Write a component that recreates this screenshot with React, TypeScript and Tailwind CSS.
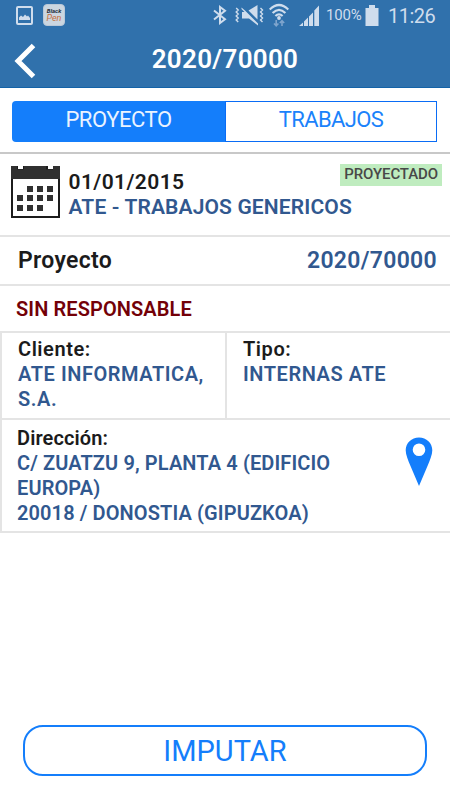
import React from "react";

const StatusBar = () => (
  <div className="flex h-[30px] items-center pl-4 pr-[14px] text-[#cfdded]">
    <svg width="17" height="19" viewBox="0 0 17 19" fill="none">
      <rect x="1" y="1" width="15" height="17" rx="1" stroke="currentColor" strokeWidth="2" />
      <path d="M3 14V11.5L5 9.5L7 11L9 8.5L11 10.5L12 9.5L14 12V14Z" fill="currentColor" />
    </svg>
    <div className="ml-[10px] flex h-[22px] w-[22px] flex-col items-center justify-center rounded-[4px] border border-[#b9c8d8] bg-[#cbd6e0]">
      <span className="text-[6px] font-bold italic leading-[6px] text-[#26303c]">Black</span>
      <span className="text-[9px] italic leading-[8px] text-[#c5703f]">Pen</span>
    </div>

    <div className="ml-auto flex items-center">
      <svg width="14" height="20" viewBox="0 0 14 20" fill="none" stroke="currentColor" strokeWidth="2">
        <path d="M1 5.5L12 14.2L7 18V2L12 5.8L1 14.5" />
      </svg>
      <svg className="ml-[8px]" width="29" height="22" viewBox="0 0 29 22" fill="currentColor">
        <path d="M6.5 3.5L10 6.5L23 19.5V21.5L14 14.5H7V8H9.5L6.5 5Z" />
        <path d="M13.5 6.5L22.5 1V15.5Z" />
        <path d="M1.2 4L3.2 6L1.2 8L3.2 10L1.2 12L3.2 14L1.2 16L3.2 18M25.5 4L27.5 6L25.5 8L27.5 10L25.5 12L27.5 14L25.5 16L27.5 18" fill="none" stroke="currentColor" strokeWidth="1.4" />
      </svg>
      <svg className="ml-[5px]" width="20" height="24" viewBox="0 0 20 24" fill="none">
        <g stroke="currentColor" strokeWidth="2.2">
          <path d="M0.7 6.5Q10 -2.5 19.3 6.5" />
          <path d="M3.6 10Q10 3.7 16.4 10" />
          <path d="M6.4 13Q10 9.7 13.6 13" />
        </g>
        <circle cx="10" cy="15" r="1.9" fill="currentColor" />
        <path d="M7.2 17V23M5 20.5L7.2 22.8L9.4 20.5M13 23V17.5M10.8 20L13 17.7L15.2 20" stroke="#7fa5cd" strokeWidth="1.6" />
      </svg>
      <svg className="ml-[10px]" width="20" height="21" viewBox="0 0 20 21" fill="currentColor">
        <path d="M0 21L4 17.5V21ZM5 16.5L9 12.5V21H5ZM10 11.5L14 7.5V21H10ZM15.3 5.5L20 0.5V21H15.3Z" />
      </svg>
      <span className="ml-[7px] w-[35px] whitespace-nowrap pt-[1px] text-[15px] leading-none tracking-[-0.2px]">100%</span>
      <svg className="ml-[4px]" width="14" height="21" viewBox="0 0 14 21" fill="currentColor">
        <path d="M4 0H10V3H13.5V21H0.5V3H4Z" />
      </svg>
      <span className="ml-[9px] w-[48px] whitespace-nowrap pt-[1px] text-[20px] leading-none tracking-[-0.5px]">11:26</span>
    </div>
  </div>
);

const CalendarIcon = () => (
  <svg className="mt-[1px]" width="50" height="52" viewBox="0 0 50 52" fill="#303030">
    <path d="M1 1H6V4H13V1H36V4H43V1H48V51H1Z" fill="#fff" stroke="#1c1c1c" strokeWidth="2" />
    <path d="M0 0H6V3.5H13V0H35V3.5H42V0H49V13H0Z" />
    <path d="M16 20h6v6h-6zM26 20h6v6h-6zM36 20h6v6h-6zM6 29h6v6H6zM16 29h6v6h-6zM26 29h6v6h-6zM36 29h6v6h-6zM6 39h6v6H6zM16 39h6v6h-6zM26 39h6v6h-6z" />
  </svg>
);

const PinIcon = () => (
  <svg width="28" height="50" viewBox="0 0 28 50">
    <path
      d="M14 0.5C6.5 0.5 0.7 6 0.7 13.3C0.7 18 3 23 5.5 29L14 49L22.5 29C25 23 27.3 18 27.3 13.3C27.3 6 21.5 0.5 14 0.5ZM14 6.5A6.3 6.3 0 1 1 14 19.1A6.3 6.3 0 1 1 14 6.5Z"
      fill="#147efb"
      fillRule="evenodd"
    />
  </svg>
);

export default function App() {
  return (
    <div className="flex h-[800px] w-[450px] flex-col bg-white font-[Roboto,sans-serif] text-[#1b1b1b]">
      <header className="h-[88px] border-b border-[#1463a8] bg-[#3071ac]">
        <StatusBar />
        <div className="flex h-[57px] items-center">
          <button className="ml-[14px] w-[22px] pt-[4px]">
            <svg width="22" height="36" viewBox="0 0 22 36" fill="none">
              <path d="M19.5 2.5L4 18L19.5 33.5" stroke="#fff" strokeWidth="5" />
            </svg>
          </button>
          <h1 className="flex-1 pr-[36px] text-center text-[26px] font-semibold leading-none tracking-[0.3px] text-white">
            2020/70000
          </h1>
        </div>
      </header>

      <div className="flex h-[66px] border-b-2 border-[#c8c8c8] pl-[12px] pr-[13px] pt-[13px]">
        <button className="h-[41px] w-[213px] rounded-l-[4px] bg-[#147efb] pb-[3px] text-[22px] leading-[36px] tracking-[-0.45px] text-[#eaf3ff]">
          PROYECTO
        </button>
        <button className="h-[41px] flex-1 border border-[#0a6cf5] pb-[3px] text-[22px] leading-[34px] tracking-[-0.6px] text-[#1a82fb]">
          TRABAJOS
        </button>
      </div>

      <div className="flex h-[83px] border-b-2 border-[#e4e4e4] pl-[11px] pr-[8px] pt-[11px]">
        <CalendarIcon />
        <div className="ml-[7.5px] mt-[5px] whitespace-nowrap text-[21px] font-semibold leading-[25px]">
          <div className="tracking-[0.4px]">01/01/2015</div>
          <div className="tracking-[0.13px] text-[#31588f]">ATE - TRABAJOS GENERICOS</div>
        </div>
        <div className="-ml-[20px] flex flex-1 justify-end">
          <span className="-mt-[1px] h-[22px] bg-[#bfecbf] px-[4px] text-[15px] font-medium leading-[20px] tracking-[-0.1px] text-[#484848]">
            PROYECTADO
          </span>
        </div>
      </div>

      <div className="flex h-[49px] items-center justify-between border-b-2 border-[#e4e4e4] pl-[18px] pr-[13px] pt-[2px] text-[23px] font-semibold tracking-[0.3px]">
        <span>Proyecto</span>
        <span className="text-[#31588f]">2020/70000</span>
      </div>

      <div className="flex h-[45px] items-center pl-4 text-[20px] font-semibold tracking-[0.1px] text-[#730007]">
        SIN RESPONSABLE
      </div>

      <div className="flex h-[87px] border-t-2 border-[#e4e4e4] text-[20px] font-semibold leading-[25px] tracking-[0.55px]">
        <div className="w-[225px] border-l-2 border-[#e4e4e4] pl-4 pt-[4px]">
          <div>Cliente:</div>
          <div className="text-[#31588f]">
            ATE INFORMATICA,
            <br />
            S.A.
          </div>
        </div>
        <div className="flex-1 border-l-2 border-[#e4e4e4] pl-4 pt-[4px]">
          <div>Tipo:</div>
          <div className="text-[#31588f]">INTERNAS ATE</div>
        </div>
      </div>

      <div className="flex h-[115px] justify-between border-y-2 border-l-2 border-[#e4e4e4] pl-[15px] pr-[17px] pt-[6px] text-[20px] font-semibold leading-[25px] tracking-[0.11px]">
        <div>
          <div>Dirección:</div>
          <div className="text-[#31588f]">
            C/ ZUATZU 9, PLANTA 4 (EDIFICIO
            <br />
            EUROPA)
            <br />
            20018 / DONOSTIA (GIPUZKOA)
          </div>
        </div>
        <div className="pt-[11px]">
          <PinIcon />
        </div>
      </div>

      <div className="mt-auto px-[23px] pb-6">
        <button className="h-[51px] w-full rounded-[20px] border-2 border-[#147efb] text-[29px] leading-[46px] text-[#147efb]">
          IMPUTAR
        </button>
      </div>
    </div>
  );
}
